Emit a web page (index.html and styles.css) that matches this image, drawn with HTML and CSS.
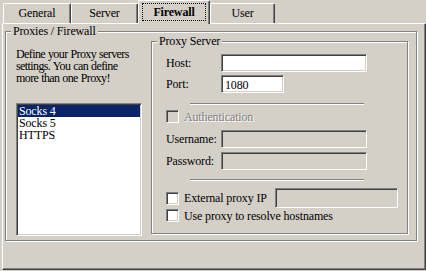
FILE: index.html
```html
<!DOCTYPE html>
<html lang="en">
<head>
    <meta charset="UTF-8">
    <title>Proxy settings</title>
    <link rel="stylesheet" href="styles.css">
</head>
<body>
    <div class="tabs">
        <div class="tab tab-general">General</div>
        <div class="tab tab-server">Server</div>
        <div class="tab tab-firewall active"><span class="focus">Firewall</span></div>
        <div class="tab tab-user">User</div>
    </div>
    <div class="panel">
        <div class="group outer">
            <span class="legend">Proxies / Firewall</span>
            <div class="left">
                <p class="intro">Define your Proxy servers settings. You can define more than one Proxy!</p>
                <ul class="listbox">
                    <li class="selected">Socks 4</li>
                    <li>Socks 5</li>
                    <li>HTTPS</li>
                </ul>
            </div>
            <div class="group server">
                <span class="legend">Proxy Server</span>
                <div class="row">
                    <span class="label">Host:</span>
                    <span class="field wide"></span>
                </div>
                <div class="row">
                    <span class="label">Port:</span>
                    <span class="field port">1080</span>
                </div>
                <div class="sep sep-1"></div>
                <div class="check-row auth">
                    <span class="box disabled"></span>
                    <span class="grayed">Authentication</span>
                </div>
                <div class="row user">
                    <span class="label">Username:</span>
                    <span class="field wide disabled"></span>
                </div>
                <div class="row">
                    <span class="label">Password:</span>
                    <span class="field wide disabled"></span>
                </div>
                <div class="sep sep-2"></div>
                <div class="check-row ext">
                    <span class="box"></span>
                    <span>External proxy IP</span>
                    <span class="field ext-ip disabled"></span>
                </div>
                <div class="check-row resolve">
                    <span class="box"></span>
                    <span>Use proxy to resolve hostnames</span>
                </div>
            </div>
        </div>
    </div>
</body>
</html>
```

FILE: styles.css
```css
body {
    margin: 0;
    width: 426px;
    height: 271px;
    overflow: hidden;
    background: #d4d0c8;
    font-family: "Liberation Serif", serif;
    font-size: 12px;
    line-height: 12px;
    letter-spacing: -0.15px;
    color: #000;
}

.tabs {
    display: flex;
    align-items: flex-end;
    height: 23px;
    padding-left: 3px;
    position: relative;
    z-index: 1;
}
.tab {
    height: 20px;
    box-sizing: border-box;
    border-top: 1px solid #fff;
    border-left: 1px solid #fff;
    border-right: 1px solid #404040;
    box-shadow: inset -1px 0 0 #808080;
    border-radius: 2px 2px 0 0;
    text-align: center;
    line-height: 18px;
}
.tab-general { width: 68px; }
.tab-server { width: 67px; }
.tab-firewall { width: 72px; }
.tab-user { width: 65px; }
.tab.active {
    height: 24px;
    margin-bottom: -1px;
    background: #d4d0c8;
    font-weight: bold;
    padding: 2px 3px 0 3px;
}
.focus {
    display: block;
    height: 18px;
    line-height: 19px;
    outline: 1px dotted #000;
    outline-offset: -1px;
}

.panel {
    margin-left: 2px;
    width: 424px;
    height: 247px;
    box-sizing: border-box;
    border-top: 1px solid #fff;
    border-left: 1px solid #fff;
    border-right: 1px solid #404040;
    border-bottom: 1px solid #404040;
    box-shadow: inset -1px -1px 0 #808080;
    padding: 7px 0 0 2px;
}

.group {
    position: relative;
    box-sizing: border-box;
    border: 1px solid #808080;
    box-shadow: inset 1px 1px 0 #fff, 1px 1px 0 #fff;
}
.legend {
    position: absolute;
    top: -7px;
    left: 5px;
    padding: 0 2px;
    background: #d4d0c8;
    line-height: 12px;
}

.outer {
    width: 412px;
    height: 210px;
    display: flex;
    align-items: flex-start;
    padding: 0 8px 0 10px;
}
.left {
    width: 126px;
    margin-top: 16px;
}
.intro {
    margin: 0;
    line-height: 12px;
    letter-spacing: -0.6px;
    word-spacing: 0.5px;
}
.listbox {
    list-style: none;
    margin: 19px 0 0 0;
    padding: 0;
    height: 133px;
    box-sizing: border-box;
    background: #fff;
    border-top: 1px solid #808080;
    border-left: 1px solid #808080;
    border-right: 1px solid #fff;
    border-bottom: 1px solid #fff;
    box-shadow: inset 1px 1px 0 #404040, inset -1px -1px 0 #d4d0c8;
    padding: 1px 1px 0 1px;
}
.listbox li {
    height: 12px;
    line-height: 12px;
    padding-left: 1px;
}
.listbox .selected {
    background: #0a246a;
    color: #fff;
}

.server {
    width: 257px;
    height: 193px;
    margin: 9px 0 0 9px;
    padding: 12px 9px 0 14px;
}
.row {
    display: flex;
    align-items: center;
    height: 18px;
    margin-bottom: 3px;
}
.row.user {
    margin-top: 7px;
    margin-bottom: 4px;
}
.label {
    width: 55px;
}
.field {
    display: block;
    box-sizing: border-box;
    height: 18px;
    background: #fff;
    border-top: 1px solid #808080;
    border-left: 1px solid #808080;
    border-right: 1px solid #fff;
    border-bottom: 1px solid #fff;
    box-shadow: inset 1px 1px 0 #404040, inset -1px -1px 0 #d4d0c8;
    padding: 3px 0 0 3px;
}
.field.disabled {
    background: #d4d0c8;
}
.wide { width: 146px; }
.port { width: 63px; }
.ext-ip {
    width: 123px;
    height: 20px;
    margin-left: auto;
}

.sep {
    margin-left: 24px;
    width: 174px;
    border-top: 1px solid #808080;
    border-bottom: 1px solid #fff;
}
.sep-1 { margin-top: 10px; }
.sep-2 { margin-top: 9px; }

.check-row {
    display: flex;
    align-items: center;
    height: 13px;
}
.check-row.auth { margin-top: 5px; }
.check-row.ext {
    height: 20px;
    margin-top: 7px;
}
.check-row.resolve { margin-top: 1px; }
.box {
    width: 13px;
    height: 13px;
    box-sizing: border-box;
    margin-right: 5px;
    background: #fff;
    border-top: 1px solid #808080;
    border-left: 1px solid #808080;
    border-right: 1px solid #fff;
    border-bottom: 1px solid #fff;
    box-shadow: inset 1px 1px 0 #404040, inset -1px -1px 0 #d4d0c8;
}
.box.disabled {
    background: #d4d0c8;
}
.grayed {
    color: #808080;
    text-shadow: 1px 1px 0 #fff;
}
```
